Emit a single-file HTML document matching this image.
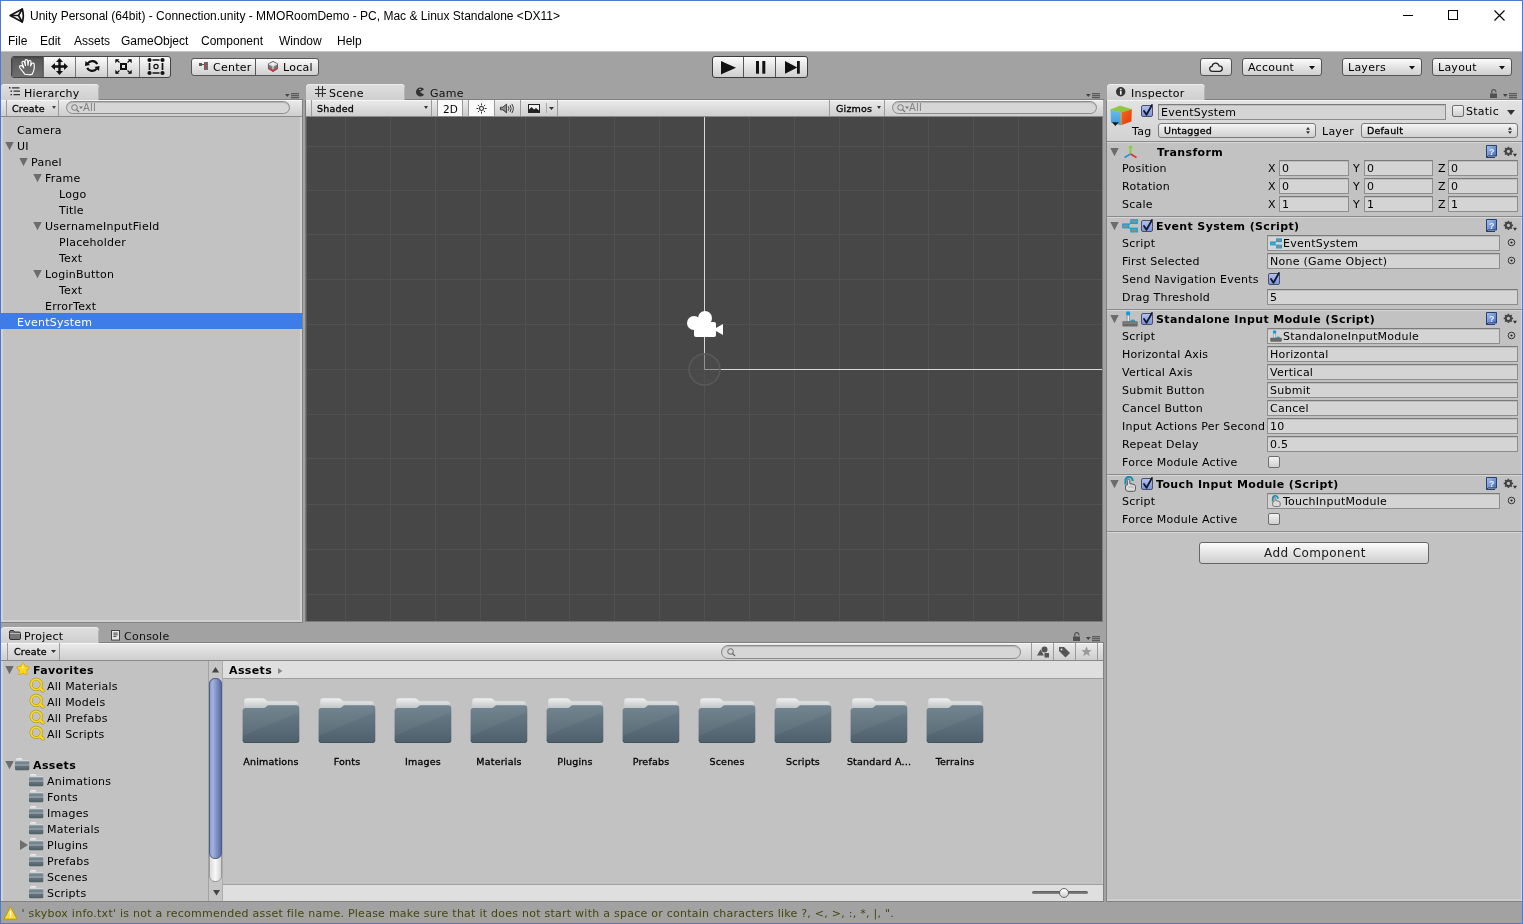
<!DOCTYPE html>
<html><head><meta charset="utf-8"><title>Unity</title>
<style>
*{box-sizing:border-box;margin:0;padding:0}
html,body{width:1523px;height:924px;overflow:hidden;background:#a2a2a2}
body{position:relative;font-family:"DejaVu Sans","Liberation Sans",sans-serif;font-size:11px;letter-spacing:.25px;color:#000;line-height:16px;white-space:nowrap}
body *{position:absolute}
.m{font-size:9.5px;letter-spacing:.2px;-webkit-text-stroke:.3px #000}
svg{display:block;overflow:visible}
#win{left:0;top:0;width:1523px;height:924px;border:1px solid #4a7ad8;z-index:50}
#title,#menu{left:1px;width:1521px;background:#fff;font-family:"Liberation Sans",sans-serif;font-size:12px;letter-spacing:0}
#title{top:1px;height:30px}
#menu{top:31px;height:20px}
#menu span{top:2px}
.panel{background:#c2c2c2;border:1px solid #828282}
.tab{height:16px;background:linear-gradient(#dfdfdf,#cfcfcf);border-radius:4px 4px 0 0;line-height:16px;box-shadow:inset 0 1px 0 #ececec,inset -1px 0 0 #b4b4b4}
.itab{height:16px;line-height:16px;color:#111}
.tbar{height:17px;background:linear-gradient(#ebebeb,#cecece);border-bottom:1px solid #8a8a8a;box-shadow:inset 0 1px 0 #f6f6f6}
.sep{width:1px;background:#9a9a9a;top:0;height:16px}
.btn{background:linear-gradient(#fcfcfc 0%,#e4e4e4 50%,#cfcfcf 100%);border:1px solid #555;border-radius:3px}
.search{height:13px;border-radius:7px;background:#d6d6d6;border:1px solid #8b8b8b;box-shadow:inset 0 1px 1px #b5b5b5;color:#808080}
.fld{height:16px;background:#d4d4d4;border:1px solid #8d8d8d;border-top-color:#7a7a7a;box-shadow:inset 0 1px 0 #bdbdbd;line-height:16px;padding-left:2px}
.dd{height:15px;background:linear-gradient(#f4f4f4,#d0d0d0);border:1px solid #7a7a7a;border-radius:3px;line-height:13px;padding-left:5px}
.b{font-weight:bold;letter-spacing:.38px}
.row{height:16px;line-height:16px}
.cb{width:12px;height:12px;border:1px solid #6d6d6d;border-radius:2px;background:linear-gradient(#f2f2f2,#cfcfcf)}
.cbon{background:linear-gradient(#b2c0ee,#7c96dc);border-color:#4a4f66}
.hr{height:1px;background:#8a8a8a;box-shadow:0 1px 0 #d6d6d6}
</style></head><body><div id="root" class="a" style="left:0;top:0;width:1523px;height:924px;will-change:transform">
<svg width="0" height="0" style="position:absolute"><defs>
<linearGradient id="fg" x1="0" y1="0" x2="0" y2="1"><stop offset="0" stop-color="#6b7f8a"/><stop offset="1" stop-color="#4e606b"/></linearGradient><linearGradient id="fs" x1="0" y1="0" x2="0" y2="1"><stop offset="0" stop-color="#7e8e96"/><stop offset=".3" stop-color="#6f8089"/><stop offset=".42" stop-color="#a3b0b6"/><stop offset=".55" stop-color="#62737c"/><stop offset="1" stop-color="#505f67"/></linearGradient>
<linearGradient id="ft" x1="0" y1="0" x2="0" y2="1"><stop offset="0" stop-color="#efefef"/><stop offset="1" stop-color="#b4babd"/></linearGradient>
<linearGradient id="bk" x1="0" y1="0" x2="1" y2="1"><stop offset="0" stop-color="#a9c4ee"/><stop offset="1" stop-color="#3f66b0"/></linearGradient>
<g id="folderS"><path d="M2 3.500Q2 2 3.500 2H7Q8 2 8.300 3L8.600 4H14Q15 4 15 5V7H2Z" fill="url(#ft)"/><rect x="1" y="5.200" width="14.300" height="9" rx="1.200" fill="url(#fs)"/></g>
<g id="folderL"><path d="M2.200 3.200Q2.200 .2 5.200 .2H20.500Q22.700 .2 23.700 1.800Q24.700 3.300 26.500 3.300H53Q55.800 3.300 55.800 6V13H2.200Z" fill="url(#ft)"/><path d="M.6 13Q.6 9.900 3.600 9.900H22Q23.500 9.900 24.500 8.500Q25.500 7.200 27 7.200H54.300Q57.300 7.200 57.300 10.200V42Q57.300 45 54.300 45H3.600Q.6 45 .6 42Z" fill="url(#fg)"/><path d="M57.300 14L.6 38V13Q.6 9.900 3.600 9.900H22Q23.500 9.900 24.500 8.500Q25.500 7.200 27 7.200H54.300Q57.300 7.200 57.300 10.200Z" fill="#fff" opacity=".05"/><path d="M1.100 42.500Q1.100 44.500 3.600 44.500H54.300Q56.800 44.500 56.800 42.500" fill="none" stroke="#3f4f58" stroke-width="1" opacity=".7"/></g>
<g id="mag"><circle cx="7.200" cy="6.400" r="5.200" fill="none" stroke="#a88800" stroke-width="2.800"/><path d="M11.200 10.400L14.200 12.800" stroke="#a88800" stroke-width="3.400" stroke-linecap="round"/><circle cx="7.200" cy="6.400" r="5.200" fill="none" stroke="#f4d824" stroke-width="1.900"/><path d="M11.200 10.400L14.200 12.800" stroke="#f4d824" stroke-width="2.500" stroke-linecap="round"/></g>
<g id="tri"><path d="M.3 0 H8.700 L4.500 8.300Z" fill="#6c6c6c"/></g>
<g id="trir"><path d="M0 0 V10 L8 5Z" fill="#6e6e6e"/></g>
<g id="book"><path d="M2.500 1.500 H12.500 V12 H4 L2.500 13.500Z" fill="url(#bk)" stroke="#27406f" stroke-width="1"/><path d="M2.500 13.500 H11" stroke="#27406f"/><text x="5" y="10.500" font-size="9" font-weight="bold" fill="#e8f0ff" font-family="Liberation Sans,sans-serif" letter-spacing="0">?</text></g>
<g id="gear" transform="translate(1.5,1) scale(.82)"><circle cx="6" cy="6.500" r="3.200" fill="none" stroke="#444" stroke-width="2.400"/><g stroke="#444" stroke-width="2"><path d="M6 .8V3M6 10v2.200M.3 6.500H2.500M9.500 6.500h2.200M2 2.500l1.500 1.500M8.500 9l1.500 1.500M10 2.500L8.500 4M3.500 9L2 10.500"/></g><path d="M11.500 9.500h5l-2.500 3.500z" fill="#333"/></g>
<g id="pick"><circle cx="4.500" cy="4.500" r="3.300" fill="none" stroke="#333" stroke-width="1"/><circle cx="4.500" cy="4.500" r="1.100" fill="#222"/></g>
<g id="pmenu"><path d="M0 1h4.600l-2.300 3z" fill="#444"/><path d="M6 .7h8M6 2.700h8M6 4.700h8" stroke="#444" stroke-width="1.100"/></g>
<g id="lock"><rect x="0" y="4.500" width="7" height="4.500" fill="#505050"/><path d="M1.800 4.500V2.500Q1.800 .6 3.800 .6Q5.800 .6 5.800 2.500V3.200" fill="none" stroke="#505050" stroke-width="1.200"/></g>
<g id="chk"><path d="M3 6 L5.500 9.800 L11 0" fill="none" stroke="#10182e" stroke-width="1.800" stroke-linecap="round" stroke-linejoin="round"/></g>
</defs></svg>
<div id="title" class="a"><svg style="left:8px;top:5.500px" width="16" height="16" viewBox="0 0 16 16"><path d="M1.200 8.500L13.300 1.900Q15.300 8.500 13.300 15.100Z" fill="none" stroke="#111" stroke-width="1.700" stroke-linejoin="round"/><path d="M1.200 8.500H9.500M9.500 8.500L13.300 1.900M9.500 8.500L13.300 15.100" fill="none" stroke="#111" stroke-width="1.700"/></svg><span style="left:29px;top:7px">Unity Personal (64bit) - Connection.unity - MMORoomDemo - PC, Mac &amp; Linux Standalone &lt;DX11&gt;</span><svg style="left:1401px;top:8px" width="110" height="14"><path d="M1 6.500H11" stroke="#000" stroke-width="1"/><rect x="46.500" y="1.500" width="9" height="9" fill="none" stroke="#000"/><path d="M92.500 1.500L102.500 11.500M102.500 1.500L92.500 11.500" stroke="#000" stroke-width="1.100"/></svg></div>
<div id="menu" class="a"><span style="left:7px">File</span><span style="left:39px">Edit</span><span style="left:73px">Assets</span><span style="left:120px">GameObject</span><span style="left:200px">Component</span><span style="left:278px">Window</span><span style="left:336px">Help</span></div>
<div class="a" style="left:1px;top:51px;width:1521px;height:1px;background:#c4c4c4"></div>
<div class="a btn" style="left:11px;top:56px;width:160px;height:22px;overflow:hidden;border-color:#444"><div style="left:0;top:0;width:31px;height:20px;background:linear-gradient(#565656,#707070);box-shadow:inset 0 1px 2px #444"></div><div style="left:31px;top:0;width:1px;height:20px;background:#6a6a6a"></div><div style="left:63px;top:0;width:1px;height:20px;background:#777"></div><div style="left:95px;top:0;width:1px;height:20px;background:#777"></div><div style="left:127px;top:0;width:1px;height:20px;background:#777"></div><svg style="left:7px;top:2px" width="16" height="16" viewBox="0 0 16 16"><path d="M6 15.300L1 9Q0 7.500 1.200 6.800Q2.500 6.300 3.500 7.500L4.800 9L3 4Q2.800 2.600 4 2.300Q5.200 2.200 5.600 3.500L6.500 6.500L6 2Q6 .6 7.300 .6Q8.600 .6 8.700 2L9 6.300L9.500 2.500Q9.800 1.300 11 1.500Q12.200 1.800 12 3L11.600 7L12.600 4.800Q13.200 3.700 14.300 4.100Q15.400 4.600 15.200 6L15.300 9Q15 12 13 15.400Q9.500 16.100 6 15.300Z" fill="none" stroke="#fff" stroke-width="1.150" stroke-linejoin="round"/></svg><svg style="left:39px;top:1px" width="17" height="17" viewBox="0 0 17 17"><path d="M8.500 0 L12 4 H9.700 V7.300 H13 V5 L17 8.500 L13 12 V9.700 H9.700 V13 H12 L8.500 17 L5 13 H7.300 V9.700 H4 V12 L0 8.500 L4 5 V7.300 H7.300 V4 H5Z" fill="#111"/></svg><svg style="left:73px;top:2px" width="14.500" height="14" viewBox="0 0 16 15"><path d="M13.500 5.500 A6 5.500 0 0 0 3 4.500" fill="none" stroke="#111" stroke-width="2.300"/><path d="M2.500 9.500 A6 5.500 0 0 0 13 10.500" fill="none" stroke="#111" stroke-width="2.300"/><path d="M.5 2 L5.500 6.500 L0 7.500Z" fill="#111"/><path d="M15.500 13 L10.500 8.500 L16 7.500Z" fill="#111"/></svg><svg style="left:103px;top:2px" width="17" height="15" viewBox="0 0 17 15"><rect x="6" y="5" width="5" height="5" fill="none" stroke="#111" stroke-width="2"/><g stroke="#111" stroke-width="1.200" fill="none"><path d="M4.500 3.500L1.500 .8M12.500 3.500L15.500 .8M4.500 11.500L1.500 14.200M12.500 11.500L15.500 14.200"/></g><path d="M.3 .3H4.300L.3 4.300ZM16.700 .3H12.700L16.700 4.300ZM.3 14.700H4.300L.3 10.700ZM16.700 14.700H12.700L16.700 10.700Z" fill="#111"/></svg><svg style="left:135px;top:1px" width="18" height="17" viewBox="0 0 18 17"><path d="M5.500 2H12.500M5.500 15H12.500M2.500 5V12M15.500 5V12" fill="none" stroke="#111" stroke-width="1.700"/><g fill="#111"><circle cx="2.500" cy="2" r="2.100"/><circle cx="15.500" cy="2" r="2.100"/><circle cx="2.500" cy="15" r="2.100"/><circle cx="15.500" cy="15" r="2.100"/></g><circle cx="9" cy="8.500" r="2.100" fill="none" stroke="#111" stroke-width="1.200"/></svg></div>
<div class="a btn" style="left:191px;top:58px;width:128px;height:18px;line-height:16px"><div style="left:63px;top:0;width:1px;height:16px;background:#555"></div><svg style="left:7px;top:3px" width="10" height="9"><rect x="0" y="1" width="3" height="3" fill="#555"/><rect x="3" y="2" width="2" height="1" fill="#555"/><rect x="5" y="0" width="4" height="8" fill="#6a6a6a"/><rect x="5" y="1" width="1" height="5" fill="#c33"/></svg><span style="left:21px;top:1px">Center</span><svg style="left:76px;top:1.500px" width="10" height="11" viewBox="0 0 11 12"><path d="M5.500 .5 L10.500 3 V8.500 L5.500 11.500 L.5 8.500 V3Z" fill="#7a7a7a" stroke="#555" stroke-width="1"/><path d="M.5 7 L5.500 9.500 L10.500 7 V8.800 L5.500 11.700 L.5 8.800Z" fill="#c9363f"/><path d="M1 3.200 L5.500 5.500 L10 3.200 M5.500 5.500 V9" fill="none" stroke="#e8e8e8" stroke-width="1.200"/><path d="M5.500 1L9.500 3L5.500 5L1.500 3Z" fill="#f2f2f2"/></svg><span style="left:91px;top:1px">Local</span></div>
<div class="a btn" style="left:712px;top:56px;width:96px;height:22px;border-color:#3c3c3c"><div style="left:30px;top:0;width:1px;height:20px;background:#555"></div><div style="left:62px;top:0;width:1px;height:20px;background:#555"></div><svg style="left:8px;top:4px" width="15" height="14"><path d="M0 0 L15 6.700 L0 13.400Z" fill="#111"/></svg><svg style="left:43px;top:4px" width="10" height="13"><rect x="0" y="0" width="3" height="12.700" fill="#111"/><rect x="6.300" y="0" width="3" height="12.700" fill="#111"/></svg><svg style="left:72px;top:4px" width="16" height="14"><path d="M0 0 L12.300 6.400 L0 12.700Z" fill="#111"/><rect x="12" y="0" width="2.800" height="12.700" fill="#111"/></svg></div>
<div class="a btn" style="left:1200px;top:58px;width:32px;height:18px"><svg style="left:8px;top:3px" width="14" height="10" viewBox="0 0 14 10"><path d="M3.500 9.300Q.7 9.300 .7 6.800Q.7 4.600 3 4.400Q3.200 2.200 5.200 1.400Q7.500 .4 9.200 2.200Q9.800 2.900 10 3.800Q13.300 3.800 13.300 6.600Q13.300 9.300 10.500 9.300Z" fill="#e6e6e6" stroke="#222" stroke-width="1.300"/></svg></div>
<div class="a btn" style="left:1242px;top:58px;width:80px;height:18px;line-height:16px"><span style="left:5px;top:1px">Account</span><svg style="left:65.500px;top:6.500px" width="6" height="3.500"><path d="M0 0H6L3 3.500Z" fill="#111"/></svg></div>
<div class="a btn" style="left:1342px;top:58px;width:80px;height:18px;line-height:16px"><span style="left:5px;top:1px">Layers</span><svg style="left:65.500px;top:6.500px" width="6" height="3.500"><path d="M0 0H6L3 3.500Z" fill="#111"/></svg></div>
<div class="a btn" style="left:1432px;top:58px;width:80px;height:18px;line-height:16px"><span style="left:5px;top:1px">Layout</span><svg style="left:65.500px;top:6.500px" width="6" height="3.500"><path d="M0 0H6L3 3.500Z" fill="#111"/></svg></div>
<div class="a panel" style="left:1px;top:100px;width:302px;height:523px;border-left:none;border-top:none;box-shadow:inset -2px -2px 0 #d0d0d0"></div>
<div class="a" style="left:99px;top:99px;width:204px;height:1px;background:#808080"></div>
<div class="a" id="lstrip" style="left:1px;top:117px;width:2px;height:505px;background:#d2d2d2"></div>
<div class="a tab" style="left:1px;top:84px;width:98px"><svg style="left:8px;top:3px" width="11" height="9"><path d="M0 .8h1.500M1.500 4.200h1.500M1.500 7.600h1.500" stroke="#333" stroke-width="1.400"/><path d="M3 .8H10.500M4.500 4.200H11M4.500 7.600H11" stroke="#333" stroke-width="1.200"/></svg><span style="left:23px;top:2px">Hierarchy</span></div>
<svg class="a" style="left:285px;top:93px" width="15" height="6"><use href="#pmenu"/></svg>
<div class="a tbar" style="left:1px;top:100px;width:301px"><div class="sep" style="left:5px"></div><span class="m" style="left:11px;top:1px">Create</span><svg style="left:51px;top:6px" width="4" height="3"><path d="M0 0H4L2 3Z" fill="#444"/></svg><div class="sep" style="left:57px"></div><div class="search" style="left:65px;top:1px;width:224px"><svg style="left:4px;top:2px" width="12" height="9"><circle cx="3.500" cy="3.500" r="2.800" fill="none" stroke="#777" stroke-width="1"/><path d="M5.500 5.500L8 8" stroke="#777" stroke-width="1.300"/><path d="M8 2.500h4l-2 2.500z" fill="#777"/></svg><span style="left:16px;top:-2px;font-size:10px">All</span></div></div>
<div class="a row" style="left:17px;top:123px;">Camera</div>
<svg class="a" style="left:5px;top:142px" width="10" height="9"><use href="#tri"/></svg>
<div class="a row" style="left:17px;top:139px;">UI</div>
<svg class="a" style="left:19px;top:158px" width="10" height="9"><use href="#tri"/></svg>
<div class="a row" style="left:31px;top:155px;">Panel</div>
<svg class="a" style="left:33px;top:174px" width="10" height="9"><use href="#tri"/></svg>
<div class="a row" style="left:45px;top:171px;">Frame</div>
<div class="a row" style="left:59px;top:187px;">Logo</div>
<div class="a row" style="left:59px;top:203px;">Title</div>
<svg class="a" style="left:33px;top:222px" width="10" height="9"><use href="#tri"/></svg>
<div class="a row" style="left:45px;top:219px;">UsernameInputField</div>
<div class="a row" style="left:59px;top:235px;">Placeholder</div>
<div class="a row" style="left:59px;top:251px;">Text</div>
<svg class="a" style="left:33px;top:270px" width="10" height="9"><use href="#tri"/></svg>
<div class="a row" style="left:45px;top:267px;">LoginButton</div>
<div class="a row" style="left:59px;top:283px;">Text</div>
<div class="a row" style="left:45px;top:299px;">ErrorText</div>
<div class="a" style="left:1px;top:313px;width:301px;height:16px;background:#3e7de7"></div>
<div class="a row" style="left:17px;top:315px;color:#fff">EventSystem</div>
<div class="a" style="left:305px;top:100px;width:798px;height:522px;background:#474747;border:1px solid #7a7a7a;border-top:none;overflow:hidden" id="scene">
<svg style="left:0;top:0" width="797" height="522"><g stroke="#515151" stroke-width="1"><path d="M39.5 17V522" /><path d="M84.5 17V522" /><path d="M129.5 17V522" /><path d="M174.5 17V522" /><path d="M219.5 17V522" /><path d="M263.5 17V522" /><path d="M308.5 17V522" /><path d="M353.5 17V522" /><path d="M398.5 17V522" /><path d="M443.5 17V522" /><path d="M488.5 17V522" /><path d="M533.5 17V522" /><path d="M577.5 17V522" /><path d="M622.5 17V522" /><path d="M667.5 17V522" /><path d="M712.5 17V522" /><path d="M757.5 17V522" /><path d="M0 46.5H797" /><path d="M0 90.5H797" /><path d="M0 134.5H797" /><path d="M0 179.5H797" /><path d="M0 224.5H797" /><path d="M0 269.5H797" /><path d="M0 314.5H797" /><path d="M0 358.5H797" /><path d="M0 404.5H797" /><path d="M0 449.5H797" /><path d="M0 494.5H797" /></g>
<path d="M.5 17V522" stroke="#5e5e5e" stroke-width="1"/><path d="M398.5 17V269.5H797" fill="none" stroke="#d8d8d8" stroke-width="1"/>
<circle cx="398.5" cy="269.5" r="15.500" fill="#4d4d4d" fill-opacity=".5" stroke="#5a5a5a" stroke-width="1.500"/>
<g transform="translate(381,211)" fill="#fff"><circle cx="7" cy="12" r="7"/><circle cx="18" cy="7" r="7"/><rect x="7" y="11" width="22" height="15" rx="2"/><path d="M28 17.500L36 13V24L28 19.500Z"/></g>
</svg>
</div>
<div class="a" style="left:405px;top:99px;width:699px;height:1px;background:#808080"></div>
<div class="a tab" style="left:306px;top:84px;width:99px"><svg style="left:9px;top:2px" width="11" height="11"><path d="M3.500 0V11M7.500 0V11M0 3.500H11M0 7.500H11" stroke="#333" stroke-width="1.100"/></svg><span style="left:23px;top:2px">Scene</span></div>
<div class="a itab" style="left:405px;top:86px;width:90px"><svg style="left:10px;top:1px" width="10" height="10" viewBox="0 0 11 11"><path d="M10 2.500A5 5 0 1 0 10 8.500L5.500 5.500Z" fill="#333"/><circle cx="5.500" cy="2.800" r=".9" fill="#c2c2c2"/></svg><span style="left:25px;top:0px">Game</span></div>
<svg class="a" style="left:1086px;top:93px" width="15" height="6"><use href="#pmenu"/></svg>
<div class="a tbar" style="left:306px;top:100px;width:797px"><div class="sep" style="left:5px"></div><span class="m" style="left:11px;top:1px">Shaded</span><svg style="left:118px;top:6px" width="4" height="3"><path d="M0 0H4L2 3Z" fill="#333"/></svg><div class="sep" style="left:125px"></div><div style="left:131px;top:0;width:26px;height:16px;background:#fafafa;border-left:1px solid #999;border-right:1px solid #999"><span style="left:5px;top:1px;letter-spacing:0;font-size:10.500px">2D</span></div><div style="left:162px;top:0;width:27px;height:16px;background:#fafafa;border-left:1px solid #999;border-right:1px solid #999"><svg style="left:7px;top:3px" width="11" height="11" viewBox="0 0 14 14"><circle cx="7" cy="7" r="2.500" fill="none" stroke="#222" stroke-width="1.300"/><path d="M7 .5V3M7 11v2.500M.5 7H3M11 7h2.500M2.400 2.400L4.200 4.200M9.800 9.800l1.800 1.800M11.600 2.400L9.800 4.200M4.200 9.800L2.400 11.600" stroke="#222" stroke-width="1.200"/></svg></div><svg style="left:194px;top:3px" width="14" height="11" viewBox="0 0 16 12"><path d="M.5 4.500H3L7.500 1V11L3 7.500H.5Z" fill="#8a8a8a" stroke="#333" stroke-width="1"/><path d="M9.500 3.500Q11 6 9.500 8.500M11.500 2Q14 6 11.500 10M13.500 .8Q17 6 13.500 11.200" fill="none" stroke="#333" stroke-width="1.100"/></svg><div class="sep" style="left:214px"></div><svg style="left:222px;top:4px" width="12" height="9"><rect x=".5" y=".5" width="11" height="8" fill="#eee" stroke="#222"/><path d="M1 8V5.500L3.500 3L6 5.500L8 4L11 6.500V8Z" fill="#222"/></svg><div style="left:240px;top:3px;width:1px;height:10px;background:#aaa"></div><svg style="left:243px;top:7px" width="5" height="3"><path d="M0 0H5L2.500 3Z" fill="#333"/></svg><div class="sep" style="left:251px"></div><div class="sep" style="left:523px"></div><span class="m" style="left:530px;top:1px">Gizmos</span><svg style="left:571px;top:6px" width="4" height="3"><path d="M0 0H4L2 3Z" fill="#333"/></svg><div class="sep" style="left:578px"></div><div class="search" style="left:586px;top:1px;width:205px"><svg style="left:4px;top:2px" width="12" height="9"><circle cx="3.500" cy="3.500" r="2.800" fill="none" stroke="#777" stroke-width="1"/><path d="M5.500 5.500L8 8" stroke="#777" stroke-width="1.300"/><path d="M8 2.500h4l-2 2.500z" fill="#777"/></svg><span style="left:16px;top:-2px;font-size:10px">All</span></div></div>
<div class="a panel" style="left:1106px;top:100px;width:416px;height:802px;border-top:none;border-right:none;box-shadow:inset 0 -2px 0 #cdcdcd"></div>
<div class="a" style="left:1205px;top:99px;width:317px;height:1px;background:#808080"></div>
<div class="a tab" style="left:1107px;top:84px;width:98px"><svg style="left:9px;top:3px" width="9.400" height="9.400" viewBox="0 0 11 11"><circle cx="5.500" cy="5.500" r="5.500" fill="#333"/><rect x="4.600" y="4.500" width="2" height="4.500" fill="#eee"/><rect x="4.600" y="2" width="2" height="1.800" fill="#eee"/></svg><span style="left:24px;top:2px">Inspector</span></div>
<svg class="a" style="left:1490px;top:89px" width="9" height="10"><use href="#lock"/></svg>
<svg class="a" style="left:1503px;top:93px" width="15" height="6"><use href="#pmenu"/></svg>
<div class="a" style="left:1521px;top:100px;width:1px;height:801px;background:#d4d4d4"></div>
<div class="a" style="left:1107px;top:100px;width:415px;height:41px;background:linear-gradient(#e2e2e2,#d2d2d2);border-top:1px solid #f4f4f4"></div>
<div class="a hr" style="left:1107px;top:141px;width:415px"></div>
<svg class="a" style="left:1110px;top:105px" width="23" height="22" viewBox="0 0 23 22"><defs><linearGradient id="cr" x1="0" y1="0" x2="1" y2="1"><stop offset="0" stop-color="#f86a18"/><stop offset="1" stop-color="#e03810"/></linearGradient><linearGradient id="cl" x1="0" y1="0" x2="0" y2="1"><stop offset="0" stop-color="#6cbcec"/><stop offset="1" stop-color="#3e9ad8"/></linearGradient></defs><path d="M.5 4.800L10 .9L21.800 4.400L11.100 7.600Z" fill="#8ec63c" stroke="#8ec63c" stroke-width=".6" stroke-linejoin="round"/><path d="M.5 4.800L11.100 7.600V20.200L.9 17.400Z" fill="url(#cl)"/><path d="M11.100 7.600L21.800 4.400L21.400 16.600L11.100 20.200Z" fill="url(#cr)"/><path d="M10.600 7.500L11.600 7.500V20L10.600 20Z" fill="#f0d020" opacity=".55"/><path d="M1.900 17.200h6.900l-3.450 3.800z" fill="#1a1a1a"/></svg>
<div class="a cb cbon" style="left:1141px;top:105px"><svg style="left:0;top:0" width="12" height="12"><use href="#chk" transform="translate(-1,-1)"/></svg></div>
<div class="a fld" style="left:1158px;top:104px;width:288px;padding-left:2px">EventSystem</div>
<div class="a cb" style="left:1452px;top:105px"></div>
<div class="a row" style="left:1466px;top:104px">Static</div><svg class="a" style="left:1507px;top:110px" width="8" height="5"><path d="M0 0H8L4 5Z" fill="#333"/></svg>
<div class="a row" style="left:1132px;top:124px">Tag</div>
<div class="a dd m" style="left:1158px;top:123px;width:158px">Untagged<svg style="right:5px;top:3px" width="4" height="7"><path d="M0 2.800L2 0L4 2.800ZM0 4.200L2 7L4 4.200Z" fill="#333"/></svg></div>
<div class="a row" style="left:1322px;top:124px">Layer</div>
<div class="a dd m" style="left:1361px;top:123px;width:157px">Default<svg style="right:5px;top:3px" width="4" height="7"><path d="M0 2.800L2 0L4 2.800ZM0 4.200L2 7L4 4.200Z" fill="#333"/></svg></div>
<svg class="a" style="left:1110px;top:148px" width="10" height="9"><use href="#tri"/></svg>
<svg class="a" style="left:1123px;top:145px" width="15" height="15" viewBox="0 0 15 15"><path d="M7.500 9V1" stroke="#7fd321" stroke-width="1.800"/><path d="M7.500 9L13.500 12.500" stroke="#e0312a" stroke-width="1.800"/><path d="M7.500 9L1.500 12.500" stroke="#2e8fe0" stroke-width="1.800"/><path d="M5.500 3L7.500 0L9.500 3Z" fill="#7fd321"/></svg>
<div class="a row b" style="left:1157px;top:145px">Transform</div>
<svg class="a" style="left:1484px;top:144px" width="14" height="15"><use href="#book"/></svg>
<svg class="a" style="left:1502px;top:145px" width="17" height="14"><use href="#gear"/></svg>
<div class="a row" style="left:1122px;top:161px">Position</div>
<div class="a row" style="left:1268px;top:161px">X</div>
<div class="a fld" style="left:1279px;top:160px;width:70px">0</div>
<div class="a row" style="left:1353px;top:161px">Y</div>
<div class="a fld" style="left:1364px;top:160px;width:69px">0</div>
<div class="a row" style="left:1438px;top:161px">Z</div>
<div class="a fld" style="left:1448px;top:160px;width:70px">0</div>
<div class="a row" style="left:1122px;top:179px">Rotation</div>
<div class="a row" style="left:1268px;top:179px">X</div>
<div class="a fld" style="left:1279px;top:178px;width:70px">0</div>
<div class="a row" style="left:1353px;top:179px">Y</div>
<div class="a fld" style="left:1364px;top:178px;width:69px">0</div>
<div class="a row" style="left:1438px;top:179px">Z</div>
<div class="a fld" style="left:1448px;top:178px;width:70px">0</div>
<div class="a row" style="left:1122px;top:197px">Scale</div>
<div class="a row" style="left:1268px;top:197px">X</div>
<div class="a fld" style="left:1279px;top:196px;width:70px">1</div>
<div class="a row" style="left:1353px;top:197px">Y</div>
<div class="a fld" style="left:1364px;top:196px;width:69px">1</div>
<div class="a row" style="left:1438px;top:197px">Z</div>
<div class="a fld" style="left:1448px;top:196px;width:70px">1</div>
<div class="a hr" style="left:1107px;top:216px;width:415px"></div>
<svg class="a" style="left:1110px;top:222px" width="10" height="9"><use href="#tri"/></svg>
<svg class="a" style="left:1122px;top:219px" width="16" height="14" viewBox="0 0 16 14"><g fill="#8d8d8d" stroke="#10a4d4" stroke-width="1.200"><rect x=".8" y="5" width="5.600" height="3.800"/><rect x="8.900" y=".8" width="6.400" height="3.600"/><rect x="8.900" y="9.300" width="6.400" height="3.600"/></g><path d="M6.500 6.500L9 3M6.500 7.300L9 11" fill="none" stroke="#10a4d4" stroke-width="1.100"/></svg>
<div class="a cb cbon" style="left:1141px;top:220px"><svg style="left:0;top:0" width="12" height="12"><use href="#chk" transform="translate(-1,-1)"/></svg></div>
<div class="a row b" style="left:1156px;top:219px">Event System (Script)</div>
<svg class="a" style="left:1484px;top:218px" width="14" height="15"><use href="#book"/></svg>
<svg class="a" style="left:1502px;top:219px" width="17" height="14"><use href="#gear"/></svg>
<div class="a row" style="left:1122px;top:236px">Script</div>
<div class="a fld" style="left:1267px;top:235px;width:233px"><svg style="left:2px;top:2px" width="12" height="11" viewBox="0 0 16 14"><g fill="#8d8d8d" stroke="#10a4d4" stroke-width="1.400"><rect x=".8" y="5" width="5.600" height="3.800"/><rect x="8.900" y=".8" width="6.400" height="3.600"/><rect x="8.900" y="9.300" width="6.400" height="3.600"/></g><path d="M6.500 6.500L9 3M6.500 7.300L9 11" fill="none" stroke="#10a4d4" stroke-width="1.200"/></svg><span style="left:15px;top:0px">EventSystem</span></div>
<svg class="a" style="left:1507px;top:238px" width="9" height="9"><use href="#pick"/></svg>
<div class="a row" style="left:1122px;top:254px">First Selected</div>
<div class="a fld" style="left:1267px;top:253px;width:233px"><span style="left:2px;top:0px">None (Game Object)</span></div>
<svg class="a" style="left:1507px;top:256px" width="9" height="9"><use href="#pick"/></svg>
<div class="a row" style="left:1122px;top:272px">Send Navigation Events</div>
<div class="a cb cbon" style="left:1268px;top:273px"><svg style="left:0;top:0" width="12" height="12"><use href="#chk" transform="translate(-1,-1)"/></svg></div>
<div class="a row" style="left:1122px;top:290px">Drag Threshold</div>
<div class="a fld" style="left:1267px;top:289px;width:251px">5</div>
<div class="a hr" style="left:1107px;top:309px;width:415px"></div>
<svg class="a" style="left:1110px;top:315px" width="10" height="9"><use href="#tri"/></svg>
<svg class="a" style="left:1122px;top:311px" width="16" height="16" viewBox="0 0 16 16"><rect x="5.100" y="3.500" width="2.200" height="7.500" fill="#e8e8e8" stroke="#777" stroke-width=".6"/><circle cx="6.100" cy="2.400" r="2.200" fill="#109ce0"/><ellipse cx="10.800" cy="9.800" rx="2.400" ry="1.200" fill="#18a8c8"/><rect x=".4" y="10.300" width="15.300" height="5.300" rx=".8" fill="#6a6a6a"/><rect x="1.400" y="11.500" width="13.300" height="1.200" fill="#858585"/></svg>
<div class="a cb cbon" style="left:1141px;top:313px"><svg style="left:0;top:0" width="12" height="12"><use href="#chk" transform="translate(-1,-1)"/></svg></div>
<div class="a row b" style="left:1156px;top:312px">Standalone Input Module (Script)</div>
<svg class="a" style="left:1484px;top:311px" width="14" height="15"><use href="#book"/></svg>
<svg class="a" style="left:1502px;top:312px" width="17" height="14"><use href="#gear"/></svg>
<div class="a row" style="left:1122px;top:329px">Script</div>
<div class="a fld" style="left:1267px;top:328px;width:233px"><svg style="left:2px;top:1px" width="12" height="12" viewBox="0 0 16 16"><rect x="5.100" y="3.500" width="2.200" height="7.500" fill="#e8e8e8" stroke="#777" stroke-width=".6"/><circle cx="6.100" cy="2.600" r="2.400" fill="#109ce0"/><ellipse cx="10.800" cy="9.800" rx="2.400" ry="1.200" fill="#18a8c8"/><rect x=".4" y="10.300" width="15.300" height="5.300" rx=".8" fill="#6a6a6a"/></svg><span style="left:15px;top:0px">StandaloneInputModule</span></div>
<svg class="a" style="left:1507px;top:331px" width="9" height="9"><use href="#pick"/></svg>
<div class="a row" style="left:1122px;top:347px">Horizontal Axis</div>
<div class="a fld" style="left:1267px;top:346px;width:251px">Horizontal</div>
<div class="a row" style="left:1122px;top:365px">Vertical Axis</div>
<div class="a fld" style="left:1267px;top:364px;width:251px">Vertical</div>
<div class="a row" style="left:1122px;top:383px">Submit Button</div>
<div class="a fld" style="left:1267px;top:382px;width:251px">Submit</div>
<div class="a row" style="left:1122px;top:401px">Cancel Button</div>
<div class="a fld" style="left:1267px;top:400px;width:251px">Cancel</div>
<div class="a row" style="left:1122px;top:419px">Input Actions Per Second</div>
<div class="a fld" style="left:1267px;top:418px;width:251px">10</div>
<div class="a row" style="left:1122px;top:437px">Repeat Delay</div>
<div class="a fld" style="left:1267px;top:436px;width:251px">0.5</div>
<div class="a row" style="left:1122px;top:455px">Force Module Active</div>
<div class="a cb" style="left:1268px;top:456px"></div>
<div class="a hr" style="left:1107px;top:474px;width:415px"></div>
<svg class="a" style="left:1110px;top:480px" width="10" height="9"><use href="#tri"/></svg>
<svg class="a" style="left:1122px;top:476px" width="16" height="16" viewBox="0 0 16 16"><path d="M3.400 8.500V5.500Q3.400 1 7 1Q10.400 1 10.700 5" fill="none" stroke="#1a8cac" stroke-width="2"/><path d="M5.300 9V4.500Q5.300 3.300 6.500 3.300Q7.800 3.300 7.800 4.500V7.500L12 8.500Q13.500 9 13.500 10.500V13.500Q13.500 15.300 11.500 15.300H6Q3.800 15.300 3.500 13V10Q3.500 9 5.300 9Z" fill="#dcdcdc" stroke="#555" stroke-width="1"/><path d="M9 9.500V12M11 10V12.500M7 10V12" stroke="#aaa" stroke-width=".8"/></svg>
<div class="a cb cbon" style="left:1141px;top:478px"><svg style="left:0;top:0" width="12" height="12"><use href="#chk" transform="translate(-1,-1)"/></svg></div>
<div class="a row b" style="left:1156px;top:477px">Touch Input Module (Script)</div>
<svg class="a" style="left:1484px;top:476px" width="14" height="15"><use href="#book"/></svg>
<svg class="a" style="left:1502px;top:477px" width="17" height="14"><use href="#gear"/></svg>
<div class="a row" style="left:1122px;top:494px">Script</div>
<div class="a fld" style="left:1267px;top:493px;width:233px"><svg style="left:2px;top:1px" width="12" height="12" viewBox="0 0 16 16"><path d="M3.400 8.500V5.500Q3.400 1 7 1Q10.400 1 10.700 5" fill="none" stroke="#1a8cac" stroke-width="2"/><path d="M5.300 9V4.500Q5.300 3.300 6.500 3.300Q7.800 3.300 7.800 4.500V7.500L12 8.500Q13.500 9 13.500 10.500V13.500Q13.500 15.300 11.500 15.300H6Q3.800 15.300 3.500 13V10Q3.500 9 5.300 9Z" fill="#dcdcdc" stroke="#555" stroke-width="1"/></svg><span style="left:15px;top:0px">TouchInputModule</span></div>
<svg class="a" style="left:1507px;top:496px" width="9" height="9"><use href="#pick"/></svg>
<div class="a row" style="left:1122px;top:512px">Force Module Active</div>
<div class="a cb" style="left:1268px;top:513px"></div>
<div class="a hr" style="left:1107px;top:531px;width:415px"></div>
<div class="a btn" style="left:1199px;top:542px;width:230px;height:22px;line-height:21px;text-align:center;font-size:12px;letter-spacing:.4px;color:#1a1a1a;border-color:#666;position:absolute"><span style="position:static;padding-left:2px">Add Component</span></div>
<div class="a panel" style="left:1px;top:643px;width:1103px;height:259px;border-left:none;border-top:none;box-shadow:inset -1px 0 0 #d0d0d0"></div>
<div class="a" style="left:99px;top:642px;width:1005px;height:1px;background:#808080"></div>
<div class="a tab" style="left:1px;top:627px;width:98px"><svg style="left:8px;top:3px" width="12" height="10"><path d="M.5 2Q.5 .5 2 .5H4.500L5.500 2H10Q11.500 2 11.500 3.500V8Q11.500 9.500 10 9.500H2Q.5 9.500 .5 8Z" fill="#777" stroke="#333" stroke-width="1"/><path d="M1 3.500H11" stroke="#ccc" stroke-width=".8"/></svg><span style="left:23px;top:2px">Project</span></div>
<div class="a itab" style="left:103px;top:629px;width:90px"><svg style="left:8px;top:.5px" width="9" height="10.500" viewBox="0 0 10 12"><rect x=".5" y=".5" width="9" height="11" fill="#e8e8e8" stroke="#333"/><path d="M2.500 3.500H7.500M2.500 5.500H7.500M2.500 7.500H6" stroke="#333" stroke-width="1"/></svg><span style="left:21px;top:0px">Console</span></div>
<svg class="a" style="left:1073px;top:632px" width="9" height="10"><use href="#lock"/></svg>
<svg class="a" style="left:1086px;top:636px" width="15" height="6"><use href="#pmenu"/></svg>
<div class="a tbar" style="left:1px;top:643px;width:1102px;height:18px"><div class="sep" style="left:6px;height:17px"></div><span class="m" style="left:13px;top:1px">Create</span><svg style="left:50px;top:7px" width="5" height="3"><path d="M0 0H5L2.500 3Z" fill="#333"/></svg><div class="sep" style="left:58px;height:17px"></div><div class="search" style="left:720px;top:2px;width:300px;height:14px"><svg style="left:5px;top:2px" width="9" height="9"><circle cx="3.500" cy="3.500" r="2.800" fill="none" stroke="#666" stroke-width="1"/><path d="M5.500 5.500L8 8" stroke="#666" stroke-width="1.300"/></svg></div><div class="sep" style="left:1030px;height:17px"></div><div class="sep" style="left:1052px;height:17px"></div><div class="sep" style="left:1074px;height:17px"></div><div class="sep" style="left:1096px;height:17px"></div><svg style="left:1035px;top:3px" width="14" height="12"><circle cx="8.500" cy="3.500" r="3" fill="#555"/><path d="M1 9.500L4.500 3.500L8 9.500Z" fill="#555"/><rect x="8.500" y="7" width="4.500" height="4.500" fill="#555"/></svg><svg style="left:1057px;top:3px" width="13" height="12"><path d="M1 1H6L12 7L7.500 11.500L1 5Z" fill="#555"/><circle cx="3.500" cy="3.500" r="1" fill="#ddd"/></svg><svg style="left:1079.500px;top:3px" width="11" height="11" viewBox="0 0 13 13"><path d="M6.500 .5L8.200 4.600L12.600 4.900L9.200 7.700L10.300 12L6.500 9.600L2.700 12L3.800 7.700L.4 4.900L4.800 4.600Z" fill="#9a9a9a"/></svg></div>
<div class="a" id="lstrip2" style="left:1px;top:661px;width:2px;height:240px;background:#d2d2d2"></div>
<svg class="a" style="left:5px;top:666px" width="10" height="9"><use href="#tri"/></svg>
<svg class="a" style="left:16px;top:662px" width="14" height="14" viewBox="0 0 14 14"><path d="M7.0 1.4L8.8 4.8L12.6 5.5L9.9 8.3L10.5 12.1L7.0 10.4L3.5 12.1L4.1 8.3L1.4 5.5L5.2 4.8Z" fill="#ffd81c" stroke="#d69c00" stroke-width="1.900" stroke-linejoin="round"/><path d="M7.0 1.4L8.8 4.8L12.6 5.5L9.9 8.3L10.5 12.1L7.0 10.4L3.5 12.1L4.1 8.3L1.4 5.5L5.2 4.8Z" fill="#ffd81c" stroke="#ffd81c" stroke-width=".7" stroke-linejoin="round"/><path d="M7 3L8 6L5 6.500Z" fill="#fff6b0" opacity=".8"/></svg>
<div class="a row b" style="left:33px;top:663px">Favorites</div>
<svg class="a" style="left:29px;top:678px" width="16" height="16"><use href="#mag"/></svg>
<div class="a row" style="left:47px;top:679px">All Materials</div>
<svg class="a" style="left:29px;top:694px" width="16" height="16"><use href="#mag"/></svg>
<div class="a row" style="left:47px;top:695px">All Models</div>
<svg class="a" style="left:29px;top:710px" width="16" height="16"><use href="#mag"/></svg>
<div class="a row" style="left:47px;top:711px">All Prefabs</div>
<svg class="a" style="left:29px;top:726px" width="16" height="16"><use href="#mag"/></svg>
<div class="a row" style="left:47px;top:727px">All Scripts</div>
<svg class="a" style="left:5px;top:761px" width="10" height="9"><use href="#tri"/></svg>
<svg class="a" style="left:14px;top:756px" width="16" height="16"><use href="#folderS"/></svg>
<div class="a row b" style="left:33px;top:758px">Assets</div>
<svg class="a" style="left:28px;top:772px" width="16" height="16"><use href="#folderS"/></svg>
<div class="a row" style="left:47px;top:774px">Animations</div>
<svg class="a" style="left:28px;top:788px" width="16" height="16"><use href="#folderS"/></svg>
<div class="a row" style="left:47px;top:790px">Fonts</div>
<svg class="a" style="left:28px;top:804px" width="16" height="16"><use href="#folderS"/></svg>
<div class="a row" style="left:47px;top:806px">Images</div>
<svg class="a" style="left:28px;top:820px" width="16" height="16"><use href="#folderS"/></svg>
<div class="a row" style="left:47px;top:822px">Materials</div>
<svg class="a" style="left:20px;top:840px" width="8" height="10"><use href="#trir"/></svg>
<svg class="a" style="left:28px;top:836px" width="16" height="16"><use href="#folderS"/></svg>
<div class="a row" style="left:47px;top:838px">Plugins</div>
<svg class="a" style="left:28px;top:852px" width="16" height="16"><use href="#folderS"/></svg>
<div class="a row" style="left:47px;top:854px">Prefabs</div>
<svg class="a" style="left:28px;top:868px" width="16" height="16"><use href="#folderS"/></svg>
<div class="a row" style="left:47px;top:870px">Scenes</div>
<svg class="a" style="left:28px;top:884px" width="16" height="16"><use href="#folderS"/></svg>
<div class="a row" style="left:47px;top:886px">Scripts</div>
<div class="a" style="left:208px;top:661px;width:15px;height:240px;background:#c6c6c6;border-left:1px solid #a2a2a2"></div>
 <svg class="a" style="left:212px;top:667px" width="7" height="5.500"><path d="M0 5.500H7L3.500 0Z" fill="#444"/></svg>
<svg class="a" style="left:212.500px;top:890px" width="7" height="5.500"><path d="M0 0H7L3.500 5.500Z" fill="#444"/></svg>
<div class="a" style="left:209px;top:678px;width:13px;height:204px;border-radius:6px;background:linear-gradient(90deg,#dcdcdc,#f8f8f8 50%,#d4d4d4);border:1px solid #9a9a9a"></div>
<div class="a" style="left:209px;top:678px;width:13px;height:181px;border-radius:6px;background:linear-gradient(90deg,#8c9ed2,#a2b2e0 25%,#7e92c6 60%,#586c9c);border:1px solid #4c5c84"></div>
<div class="a" style="left:222px;top:661px;width:1px;height:240px;background:#adadad"></div>
<div class="a" style="left:223px;top:661px;width:880px;height:18px;background:#dfdfdf;border-bottom:1px solid #a0a0a0"></div>
<div class="a row b" style="left:229px;top:663px">Assets</div><svg class="a" style="left:278px;top:668px" width="5" height="6"><path d="M0 0V6L4.500 3Z" fill="#888"/></svg>
<svg class="a" style="left:242px;top:698px" width="58" height="46"><use href="#folderL"/></svg>
<div class="a row m" style="left:233px;top:754px;width:76px;text-align:center">Animations</div>
<svg class="a" style="left:318px;top:698px" width="58" height="46"><use href="#folderL"/></svg>
<div class="a row m" style="left:309px;top:754px;width:76px;text-align:center">Fonts</div>
<svg class="a" style="left:394px;top:698px" width="58" height="46"><use href="#folderL"/></svg>
<div class="a row m" style="left:385px;top:754px;width:76px;text-align:center">Images</div>
<svg class="a" style="left:470px;top:698px" width="58" height="46"><use href="#folderL"/></svg>
<div class="a row m" style="left:461px;top:754px;width:76px;text-align:center">Materials</div>
<svg class="a" style="left:546px;top:698px" width="58" height="46"><use href="#folderL"/></svg>
<div class="a row m" style="left:537px;top:754px;width:76px;text-align:center">Plugins</div>
<svg class="a" style="left:622px;top:698px" width="58" height="46"><use href="#folderL"/></svg>
<div class="a row m" style="left:613px;top:754px;width:76px;text-align:center">Prefabs</div>
<svg class="a" style="left:698px;top:698px" width="58" height="46"><use href="#folderL"/></svg>
<div class="a row m" style="left:689px;top:754px;width:76px;text-align:center">Scenes</div>
<svg class="a" style="left:774px;top:698px" width="58" height="46"><use href="#folderL"/></svg>
<div class="a row m" style="left:765px;top:754px;width:76px;text-align:center">Scripts</div>
<svg class="a" style="left:850px;top:698px" width="58" height="46"><use href="#folderL"/></svg>
<div class="a row m" style="left:841px;top:754px;width:76px;text-align:center">Standard A...</div>
<svg class="a" style="left:926px;top:698px" width="58" height="46"><use href="#folderL"/></svg>
<div class="a row m" style="left:917px;top:754px;width:76px;text-align:center">Terrains</div>
<div class="a" style="left:223px;top:884px;width:880px;height:17px;background:#dfdfdf;border-top:1px solid #a0a0a0"></div>
<div class="a" style="left:1032px;top:891px;width:56px;height:3px;border-radius:2px;background:linear-gradient(#5a5a5a,#8a8a8a)"></div>
<div class="a" style="left:1058.500px;top:887.500px;width:10px;height:10px;border-radius:5px;background:linear-gradient(#fff,#d0d0d0);border:1px solid #666"></div>
<svg class="a" style="left:3px;top:906px" width="15" height="14" viewBox="0 0 17 16"><path d="M8.500 1L16 15H1Z" fill="#ffd83a" stroke="#b89400" stroke-width="1" stroke-linejoin="round"/><rect x="7.700" y="5.500" width="1.600" height="5.500" fill="#fff"/><rect x="7.700" y="12" width="1.600" height="1.600" fill="#fff"/></svg>
<div class="a row" style="left:21.500px;top:906px;color:#44470c">' skybox info.txt' is not a recommended asset file name. Please make sure that it does not start with a space or contain characters like ?, &lt;, &gt;, :, *, |, ".</div>
<div id="win" class="a"></div>
</div></body></html>
